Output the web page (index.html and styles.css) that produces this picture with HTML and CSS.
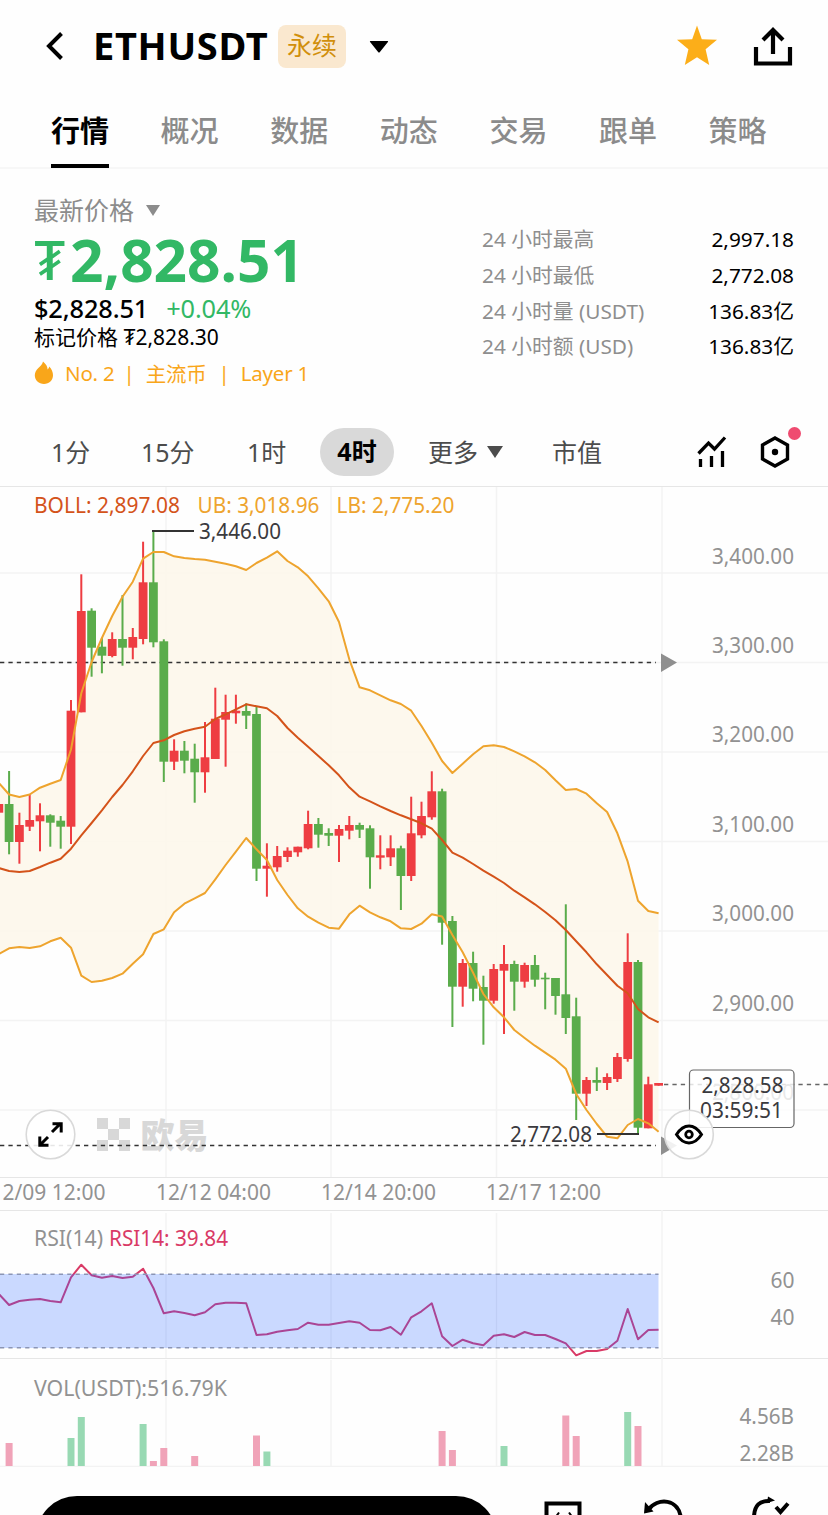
FILE: index.html
```html
<!DOCTYPE html>
<html lang="zh-CN">
<head>
<meta charset="utf-8">
<title>ETHUSDT 永续</title>
<link rel="stylesheet" href="styles.css">
</head>
<body>
<header class="header">
  <svg class="back" width="20" height="30" viewBox="0 0 20 30"><path d="M16.500 2.500 4 15l12.500 12.500" fill="none" stroke="#000" stroke-width="4"/></svg>
  <h1 class="symbol">ETHUSDT</h1>
  <span class="badge">永续</span>
  <svg class="caret-lg" width="20" height="13" viewBox="0 0 20 13"><path d="M1.500 1h17q1.200 0 .4 1l-8 10q-.9 1-1.800 0l-8-10q-.8-1 .4-1z"/></svg>
  <svg class="star" width="42" height="42" viewBox="0 0 42 42"><path d="M21 1.500 25.800 15.300 41 15.800 29.600 25.200 33.200 41 21 33.300 8.800 41 12.400 25.200 1 15.800 16.200 15.300z" fill="#fcae19"/></svg>
  <svg class="share" width="40" height="42" viewBox="0 0 40 42"><path d="M3 22v16.500h34V22M20 29V5M10 15 20 5l10 10" fill="none" stroke="#000" stroke-width="4.200"/></svg>
</header>

<nav class="tabs">
  <a class="tab active">行情</a><a class="tab">概况</a><a class="tab">数据</a><a class="tab">动态</a><a class="tab">交易</a><a class="tab">跟单</a><a class="tab">策略</a>
</nav>

<section class="summary">
  <div class="quote">
    <div class="kind">最新价格 <svg width="14" height="11" viewBox="0 0 14 11"><path d="M0 0h14L7 11z" fill="#8c8c8c"/></svg></div>
    <div class="price"><span class="unit">₮</span><span>2,828.51</span></div>
    <div class="fiat"><span>$2,828.51</span><span class="change">+0.04%</span></div>
    <div class="mark">标记价格 ₮2,828.30</div>
    <div class="tags">
      <svg width="20" height="24" viewBox="0 0 20 24"><path d="M9 .5c3 2.500 4.500 5 4.600 8 1-.8 1.500-1.900 1.600-3 2.600 2.600 3.800 5.500 3.800 8.800 0 5-3.800 8.700-9 8.700S.8 19.300.8 14.300c0-3 1.500-5.200 3.600-7.300C6.500 5 8.600 3.200 9 .5z" fill="#f9a61a"/></svg>
      <span>No. 2</span><span class="bar">|</span><span>主流币</span><span class="bar wide">|</span><span>Layer 1</span>
    </div>
  </div>
  <dl class="stats">
    <dt>24 小时最高</dt><dd>2,997.18</dd>
    <dt>24 小时最低</dt><dd>2,772.08</dd>
    <dt>24 小时量 (USDT)</dt><dd>136.83亿</dd>
    <dt>24 小时额 (USD)</dt><dd>136.83亿</dd>
  </dl>
</section>

<div class="toolbar">
  <span class="period p1">1分</span><span class="period p15">15分</span><span class="period p60">1时</span><span class="period on">4时</span>
  <span class="period more">更多 <svg width="16" height="12" viewBox="0 0 16 12"><path d="M0 0h16L8 12z" fill="#4c4c4c"/></svg></span>
  <span class="period cap">市值</span>
  <svg class="indicator" width="30" height="32" viewBox="0 0 30 32"><path d="M1.500 17.500 11.500 7l6 6L28 1.500M3.500 23v8M14.500 20v11M25.500 15v16" fill="none" stroke="#000" stroke-width="3.300"/></svg>
  <span class="settings">
    <svg width="32" height="34" viewBox="0 0 32 34"><path d="M16 3 28.500 10v14L16 31 3.500 24V10z" fill="none" stroke="#000" stroke-width="3.400"/><circle cx="16" cy="17" r="3.200"/></svg>
    <i class="dot"></i>
  </span>
</div>

<main class="charts">
  <svg class="pane" width="828" height="690" viewBox="0 487 828 690">
    <g class="grid"><path d="M166 487v690M331 487v690M496.500 487v690M662 487v690M0 573h828M0 662.500h828M0 752h828M0 841.500h828M0 931h828M0 1020.500h828M0 1110h828"/></g>
    <path id="band" class="band"/>
    <g class="watermark">
      <path d="M97 1118h11v11H97zM119 1118h11v11h-11zM108 1129h11v11h-11zM97 1140h11v11H97zM119 1140h11v11h-11z"/>
      <text x="140.500" y="1147.500" textLength="68" lengthAdjust="spacingAndGlyphs">欧易</text>
    </g>
    <path class="alert" d="M0 662.500h656M0 1145.500h656"/>
    <g id="candles"></g>
    <path id="upper" class="line outer"/><path id="lower" class="line outer"/><path id="middle" class="line mid"/>
    <path d="M152 531h42M597 1134h42" stroke="#333" stroke-width="2.200"/>
    <path d="M661 653.500 677 662.500 661 672zM661 1136.500 677 1145.500 661 1155z" fill="#8f8f8f"/>
    <path class="alert soft" d="M664 1084.500h164"/>
    <g class="num">
      <text class="boll" x="34" y="513" textLength="146" lengthAdjust="spacingAndGlyphs">BOLL: 2,897.08</text>
      <text class="ub" x="197.500" y="513" textLength="122" lengthAdjust="spacingAndGlyphs">UB: 3,018.96</text>
      <text class="ub" x="336.500" y="513" textLength="118" lengthAdjust="spacingAndGlyphs">LB: 2,775.20</text>
      <text class="dark" x="199" y="539" textLength="82" lengthAdjust="spacingAndGlyphs">3,446.00</text>
      <text class="dark" x="510" y="1142" textLength="82" lengthAdjust="spacingAndGlyphs">2,772.08</text>
      <text x="712" y="563.500" textLength="82" lengthAdjust="spacingAndGlyphs">3,400.00</text>
      <text x="712" y="652.500" textLength="82" lengthAdjust="spacingAndGlyphs">3,300.00</text>
      <text x="712" y="742" textLength="82" lengthAdjust="spacingAndGlyphs">3,200.00</text>
      <text x="712" y="832" textLength="82" lengthAdjust="spacingAndGlyphs">3,100.00</text>
      <text x="712" y="921" textLength="82" lengthAdjust="spacingAndGlyphs">3,000.00</text>
      <text x="712" y="1010.500" textLength="82" lengthAdjust="spacingAndGlyphs">2,900.00</text>
      <text x="712" y="1100" textLength="82" lengthAdjust="spacingAndGlyphs">2,800.00</text>
      <rect x="689.500" y="1070" width="104.500" height="57.500" rx="4" fill="#fff" fill-opacity=".8" stroke="#666" stroke-width="1.200"/>
      <text class="dark" x="701.500" y="1093" textLength="82" lengthAdjust="spacingAndGlyphs">2,828.58</text>
      <text class="dark" x="700" y="1118" textLength="83" lengthAdjust="spacingAndGlyphs">03:59:51</text>
    </g>
    <circle class="round" cx="50.500" cy="1134.500" r="24.300"/>
    <path d="M52 1132 61 1123M52.500 1123.800H61.200V1132.500M48 1137 39.500 1145.500M39.800 1136.500V1145.200H48.500" fill="none" stroke="#000" stroke-width="3"/>
    <circle class="round" cx="689" cy="1134.500" r="24.300"/>
    <path d="M676.500 1134.500Q682 1126 689 1126T701.500 1134.500Q696 1143 689 1143T676.500 1134.500z" fill="none" stroke="#000" stroke-width="3"/>
    <circle cx="689" cy="1134.500" r="3.300" fill="none" stroke="#000" stroke-width="2.800"/>
  </svg>
  <svg class="pane axis" width="828" height="33" viewBox="0 1177 828 33">
    <g class="num"><text x="2.500" y="1200" textLength="103" lengthAdjust="spacingAndGlyphs">2/09 12:00</text><text x="156" y="1200" textLength="115" lengthAdjust="spacingAndGlyphs">12/12 04:00</text><text x="321" y="1200" textLength="115" lengthAdjust="spacingAndGlyphs">12/14 20:00</text><text x="486" y="1200" textLength="115" lengthAdjust="spacingAndGlyphs">12/17 12:00</text></g>
  </svg>
  <svg class="pane axis" width="828" height="148" viewBox="0 1210 828 148">
    <defs>
      <linearGradient id="rsiTone" gradientUnits="userSpaceOnUse" x1="0" y1="1264" x2="0" y2="1358">
        <stop offset=".11" stop-color="#d93a66"/><stop offset=".11" stop-color="#aa4595"/><stop offset=".895" stop-color="#aa4595"/><stop offset=".895" stop-color="#d93a66"/>
      </linearGradient>
    </defs>
    <g class="grid"><path d="M166 1213v145M331 1213v145M496.500 1213v145M662 1210v148"/></g>
    <rect x="0" y="1274" width="658.500" height="74" fill="#cad9ff"/>
    <path class="over" d="M166 1274v74M331 1274v74M496.500 1274v74"/>
    <path id="rsi" class="rsi" stroke="url(#rsiTone)"/>
    <path d="M0 1274.300h658.500M0 1347.800h658.500" stroke="#8b95b4" stroke-width="1.600" stroke-dasharray="4.200 4.200"/>
    <g class="num"><text x="34" y="1246" textLength="69" lengthAdjust="spacingAndGlyphs">RSI(14)</text><text class="pink" x="109" y="1246" textLength="119" lengthAdjust="spacingAndGlyphs">RSI14: 39.84</text><text x="770.500" y="1287.500" textLength="24" lengthAdjust="spacingAndGlyphs">60</text><text x="770.500" y="1324.500" textLength="24" lengthAdjust="spacingAndGlyphs">40</text></g>
  </svg>
  <svg class="pane axis volume" width="828" height="109" viewBox="0 1358 828 109">
    <g class="grid"><path d="M166 1360v107M331 1360v107M496.500 1360v107M662 1358v109M0 1466.500h828"/></g>
    <g id="volume"></g>
    <g class="num"><text x="34" y="1396" textLength="193" lengthAdjust="spacingAndGlyphs">VOL(USDT):516.79K</text><text x="739.500" y="1423.500" textLength="54.500" lengthAdjust="spacingAndGlyphs">4.56B</text><text x="739.500" y="1461" textLength="54.500" lengthAdjust="spacingAndGlyphs">2.28B</text></g>
  </svg>
</main>

<footer class="actions">
  <div class="trade"></div>
  <svg class="act-a" width="40" height="30" viewBox="0 0 40 30"><path d="M3.500 30V4.500h33V30" fill="none" stroke="#000" stroke-width="4"/><path d="M16 13.500 13.500 17M26 13.500 28.500 17" stroke="#000" stroke-width="2"/></svg>
  <svg class="act-b" width="42" height="30" viewBox="0 0 42 30"><path d="M5 12C14-1 37 0 38 22" fill="none" stroke="#000" stroke-width="4"/><path d="M2 4 1 15.500 10.500 13.500z"/></svg>
  <svg class="act-c" width="40" height="30" viewBox="0 0 40 30"><path d="M3 22C3 9 9 4.500 19 5M25 11l4.500 5L37 7.500" fill="none" stroke="#000" stroke-width="4"/><path d="M17 .5 24 4.500 16 7z"/></svg>
</footer>
<script src="chart.js"></script>
</body>
</html>
```
FILE: styles.css
```css
* { box-sizing: border-box; }
body {
  margin: 0;
  width: 828px;
  height: 1515px;
  overflow: hidden;
  background: #fefefe;
  color: #000;
  font-family: "Noto Sans", "Noto Sans CJK SC", sans-serif;
}
svg { display: block; flex: none; }
.header { display: flex; align-items: center; height: 92px; padding: 0 35px 0 45px; }
.symbol { margin: -3px 0 0 28px; width: 175px; font-size: 38px; line-height: 50px; font-weight: 700; white-space: nowrap; letter-spacing: .7px; }
.badge { margin-left: 10px; margin-top: 1px; width: 68px; height: 43px; border-radius: 8px; background: #fae8cf; color: #d18f0c; font-size: 25px; line-height: 41px; text-align: center; }
.caret-lg { margin-left: 23px; }
.star { margin: -2px 0 0 287px; }
.share { margin-left: auto; }

.tabs { display: flex; gap: 51.600px; height: 77px; padding-left: 51px; border-bottom: 2px solid #f7f7f7; }
.tab { height: 76px; width: 58px; color: #8b8b8b; font-size: 29px; line-height: 78px; font-weight: 500; white-space: nowrap; }
.tab.active { color: #000; font-weight: 700; border-bottom: 4px solid #000; }

.summary { display: flex; justify-content: space-between; height: 241px; padding: 24px 34px 0; }
.quote { width: 400px; }
.kind { display: flex; align-items: center; gap: 12px; height: 34px; color: #8c8c8c; font-size: 25px; line-height: 34px; }
.price { display: flex; align-items: center; height: 66px; color: #32b865; font-size: 58.500px; line-height: 64px; font-weight: 700; }
.price span { height: 66px; }
.unit { width: 36px; font-size: 55px; font-weight: 500; }
.fiat { display: flex; gap: 18px; height: 30px; font-size: 25.300px; line-height: 31px; font-weight: 500; letter-spacing: -.1px; }
.change { color: #32b865; font-weight: 400; }
.mark { height: 29px; font-size: 21px; line-height: 28px; }
.tags { display: flex; align-items: center; height: 42px; color: #f9a61a; font-size: 20.500px; letter-spacing: -.2px; }
.tags svg { margin-right: 11px; }
.bar { margin: 0 11px 0 9px; }
.bar.wide { margin: 0 11px 0 12px; }
.stats { display: grid; grid-template-columns: 1fr auto; grid-auto-rows: 35.800px; width: 312px; margin: 28px 0 0; font-size: 20.800px; line-height: 36px; }
.stats dt { color: #8e8e8e; }
.stats dd { margin: 0; text-align: right; }

.toolbar { display: flex; align-items: center; height: 77px; padding: 6px 34px 0 51px; color: #4c4c4c; font-size: 25px; }
.toolbar > .period { line-height: 46px; white-space: nowrap; }
.p1 { width: 90px; }
.p15 { width: 106px; }
.p60 { width: 73px; }
.on { width: 74px; height: 48px; border-radius: 24px; background: #d9d9d9; color: #000; font-weight: 700; text-align: center; }
.more { display: flex; align-items: center; gap: 9px; width: 91px; margin-left: 34px; }
.cap { width: 50px; margin-left: 33px; }
.indicator { margin-left: 95px; }
.settings { position: relative; margin-left: auto; margin-right: 3px; }
.dot { position: absolute; top: -8px; right: -10px; width: 13px; height: 13px; border-radius: 50%; background: #ef4b70; }

.pane { overflow: hidden; }
.charts { height: 980px; box-shadow: 0 -1px #e6e6e6; }
.axis { box-shadow: inset 0 1px #e6e6e6; }
.grid { fill: none; stroke: #f3f3f3; stroke-width: 1.500; }
.over { fill: none; stroke: #bfcef5; stroke-width: 1.200; }
.band { fill: #fdf7eb; fill-opacity: .88; }
.line { fill: none; stroke-width: 2; stroke-linejoin: round; }
.outer { stroke: #eea42e; }
.mid { stroke: #d4531a; }
.alert { fill: none; stroke: #333; stroke-width: 1.400; stroke-dasharray: 4.300 4.100; }
.soft { stroke: #666; }
.watermark { fill: #d8d8d8; font-size: 34px; font-weight: 900; }
.num { fill: #929292; font-size: 21.500px; }
.dark { fill: #3a3a3e; }
.boll { fill: #d4531a; }
.ub { fill: #eea42e; }
.pink { fill: #d93a66; }
.round { fill: #fff; fill-opacity: .88; stroke: #d9d9d9; stroke-width: 1.600; }
.up { fill: #ee3d42; }
.down { fill: #5aac4b; }
.rsi { fill: none; stroke-width: 2; stroke-linejoin: round; }
.buy { fill: #98d9b3; }
.sell { fill: #f0a3b8; }

.actions { display: flex; height: 48px; padding: 29px 37px 0 36px; overflow: hidden; }
.trade { width: 461px; height: 82px; flex: none; border-radius: 41px; background: #000; }
.act-a { margin: 3px 0 0 46px; }
.act-b { margin: 2px 0 0 60px; }
.act-c { margin: 0 0 0 auto; }
```
FILE: chart.js
```js
const NS = 'http://www.w3.org/2000/svg';
const px = i => +(9.1 + 10.31 * i).toFixed(1);

// [direction, high, body top, body bottom, low]; the first one is cut by the left edge
const candles = [
  ['r',804,804,812.7,812.7],
  ['g',771,804,842,854.3],['r',812.7,825,842,863.7],['r',794.3,820,826.7,831],['r',803.3,815.3,821.3,851.3],
  ['g',814.3,815.3,822.7,846.7],['g',816,820.7,826.7,848.7],['r',700,710.7,826.7,844],['r',574.3,611,712.3,712.3],
  ['g',608.3,610.7,647.7,676.7],['g',638,646.7,655.7,673.3],['r',632.3,639,656,657.3],['g',595,639,647.7,665.7],
  ['r',628,637,647.7,659.3],['r',541.7,582.3,639,644.3],['g',530,582.3,642.3,647.3],['g',639.3,641.3,761.7,782],
  ['r',739.3,750.7,761.7,770],['g',741,750.7,760.7,773.3],['g',743.7,758.7,772.3,802.7],['r',722,757.3,772.3,792.7],
  ['r',687.7,718.7,759,759],['r',694.7,712,719.7,766.7],['r',694.7,710.7,713.3,723.7],['g',703.3,711,715.7,729],
  ['g',706.7,714,868.7,881],['r',843.3,865.7,868.7,896.7],['r',846,856,867.3,871.7],['r',847.3,850.7,857,862],
  ['r',846.7,846.7,852.3,856.7],['r',810.7,824,848.3,849.3],['g',818,824,834.7,847.7],['g',828.3,833,835.7,846],
  ['r',825,829,835.7,862],['r',816,825,830.7,839.3],['g',822.7,825,829.7,838],['g',825.3,828.3,857.3,888.7],
  ['r',835.3,855.3,857.7,869.3],['r',835.3,848.3,857.3,866],['g',845.7,848.3,876,910],['r',796.7,833.3,876,881],
  ['r',801.7,816,835.3,838.3],['r',771.3,791.3,817.3,819.7],['g',788.7,791.3,922.7,944.7],['g',916,921,986.7,1027],
  ['r',959,963,986.7,1006.7],['g',951.7,963,988.7,1001.3],['g',975.7,987,1000.7,1044.7],['r',964,969,1000.7,1003.7],
  ['r',945,964,970.7,1034],['g',960.7,964,981.7,1010.7],['r',962.7,965,981.7,987.7],['g',955,965,979.7,986.7],
  ['g',972.7,977.7,979.3,1009.3],['g',978,978,996,1014.7],['g',904.3,994.3,1018,1034],['g',997.7,1016.3,1093.7,1120],
  ['r',1077,1080,1093.7,1106],['g',1067.3,1080,1082.7,1091],['r',1073.3,1077,1083,1090],['r',1053,1057,1079,1082],
  ['r',933.3,962,1059,1061.7],['g',960,962,1127.7,1133],['r',1076.7,1084.3,1128.3,1128.3],['r',1083,1083,1085.7,1085.7]
];
const upper = [783,794.5,797,794.5,787.7,783.7,780,749.5,693.3,662,638,616,596.7,581.7,558.7,552,552,556.3,558,559,559.7,561.7,563.7,566.3,570,563,557.7,551.3,561,567.3,576.3,588.3,601.3,622,659.3,687.3,690.3,695.3,700.3,704,710.7,726,742.7,761,773,763.7,754.3,746.3,745.3,747,751.3,756.3,762.3,770,780.3,790,789,793.7,803.3,812,833.3,861.7,900.7,911,913.3];
const middle = [868,871,872,871,867,862.7,858.7,848.7,835.3,823,810.3,797,785,771.3,756,743,740.3,735,731.3,728.7,726.7,719,714.3,709.3,704.3,706.3,708.3,716,728,737.7,746.7,756,765.3,775.3,787.3,796.7,801.3,806.3,811,815.3,819.3,823.3,828.7,840,852.7,857.7,864,870.7,876.7,883,890.7,897.3,904.3,912,920.3,930,941.3,952.3,964.3,975,985.7,993.3,1009,1017.3,1022.3];
const lower = [954,948.3,947,948,946.3,941.3,937.7,947.7,975.7,982,980.7,978,973.7,963.7,954.3,934,929.3,912.3,903.7,898.3,893,879.3,865,851.7,838,849.3,860,880,895,908.3,916.7,922.7,927.7,928.7,914.3,905.7,912.3,917.3,921.3,928.3,929,923.7,914.3,916.5,935,952.3,972.7,994,1007.3,1017.3,1030,1038,1045.7,1052.7,1059.7,1068.7,1094,1110,1124,1136.7,1138.3,1125,1119,1123.3,1131.7];
const rsi = [1294,1305,1301,1299.7,1299,1301,1302.3,1277.3,1264.7,1275.3,1277.7,1276,1278,1276.7,1268.7,1288,1313.3,1311.3,1313,1315.3,1312.3,1304.3,1302.7,1302.7,1303.3,1335,1334.3,1331.7,1330.3,1329,1322.7,1324.7,1324.7,1323,1321.3,1322.7,1330,1330.3,1327,1334.7,1317.3,1311.3,1303.3,1336.3,1346,1339.7,1343.3,1345.3,1335.7,1334.3,1337,1332,1335,1335,1339,1343.3,1355.3,1351,1351,1349,1340.7,1309,1339.3,1330,1329.7];
const volume = [[0,'sell',1443],[6,'buy',1438],[7,'buy',1417],[13,'buy',1424],[14,'sell',1461],[15,'sell',1448],[18,'sell',1456],[24,'sell',1435.5],[25,'buy',1451.5],[42,'sell',1431],[43,'sell',1450],[48,'buy',1446],[54,'sell',1415.5],[55,'sell',1436],[60,'buy',1412],[61,'sell',1426]];

const points = s => s.map((y, n) => px(n - 1) + ' ' + y);
const draw = (id, d) => document.getElementById(id).setAttribute('d', d);
function rect(parent, cls, x, y, w, h) {
  const r = document.createElementNS(NS, 'rect');
  for (const [k, v] of Object.entries({ class: cls, x, y, width: w, height: h })) r.setAttribute(k, v);
  parent.appendChild(r);
}

draw('upper', 'M' + points(upper).join('L'));
draw('middle', 'M' + points(middle).join('L'));
draw('lower', 'M' + points(lower).join('L'));
draw('rsi', 'M' + points(rsi).join('L'));
draw('band', 'M' + points(upper).concat(points(lower).reverse()).join('L') + 'z');

const cg = document.getElementById('candles');
candles.forEach(([c, hi, top, bot, lo], n) => {
  const cls = c === 'r' ? 'up' : 'down', x = px(n - 1);
  rect(cg, cls, x - 1, hi, 2, lo - hi);
  rect(cg, cls, x - 4.4, top, 8.8, bot - top);
});
const vg = document.getElementById('volume');
volume.forEach(([i, cls, y]) => rect(vg, cls, px(i) - 3.5, y, 7, 1466 - y));
```
